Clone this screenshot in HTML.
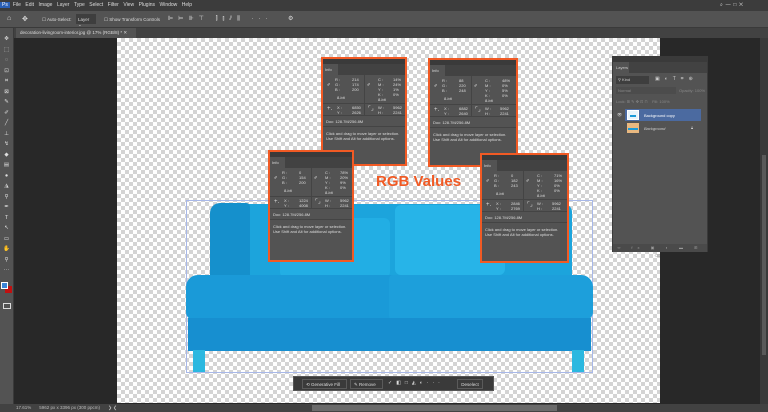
<!DOCTYPE html>
<html><head><meta charset="utf-8"><style>
*{margin:0;padding:0;box-sizing:border-box}
body{width:768px;height:412px;overflow:hidden;background:#282828;font-family:"Liberation Sans",sans-serif;position:relative;color:#ccc}
.a{position:absolute}
.menu{left:0;top:0;width:768px;height:11px;background:#3c3c3c;font-size:5px;color:#ddd;line-height:11px}
.menu span{margin-right:4.5px}
.opt{left:0;top:11px;width:768px;height:17px;background:#535353;border-bottom:1px solid #3a3a3a;font-size:4.5px;color:#ddd}
.tab{left:14px;top:28px;width:754px;height:10px;background:#424242}
.tool{left:0;top:28px;width:14px;height:377px;background:#535353;border-right:1px solid #3a3a3a}
.canvas{left:117px;top:38px;width:543px;height:365px;background-color:#fff;background-image:conic-gradient(#d4d4d4 25%,#fff 0 50%,#d4d4d4 0 75%,#fff 0);background-size:8px 8px}
.status{left:0;top:404px;width:768px;height:8px;background:#424242;font-size:4.5px;color:#bbb;line-height:8px}
.info{width:86px;height:109px;border:2px solid #f15a24;background:#535353;font-size:4px;color:#ddd;overflow:hidden}
.info .h{position:absolute;left:0;top:0;right:0;height:5px;background:#3a3a3a}
.info .t{position:absolute;left:0;top:5px;right:0;height:11px;background:#424242}
.info .t b{display:block;width:15px;height:11px;background:#535353;font-weight:normal;line-height:11px;padding-left:2px}
.info .l{position:absolute;background:#444}
.info p{position:absolute;white-space:nowrap;line-height:5px}
.lay{left:612px;top:56px;width:96px;height:196px;background:#535353;border:1px solid #3a3a3a;font-size:4px;color:#ccc}
</style></head><body>
<div class="a menu"><span style="background:#2a5fb5;color:#fff;padding:0 2px;margin-right:3px">Ps</span><span>File</span><span>Edit</span><span>Image</span><span>Layer</span><span>Type</span><span>Select</span><span>Filter</span><span>View</span><span>Plugins</span><span>Window</span><span>Help</span>
<span class="a" style="left:720px;top:0">⌕ &nbsp;— &nbsp;□ &nbsp;✕</span></div>
<div class="a opt"><span class="a" style="left:7px;top:4px;font-size:7px">⌂</span><span class="a" style="left:22px;top:4px;font-size:7px">✥</span><span class="a" style="left:42px;top:6px">☐ Auto-Select:</span><span class="a" style="left:76px;top:3px;width:20px;height:10px;background:#3e3e3e;padding:3px 2px">Layer ⌄</span><span class="a" style="left:104px;top:6px">☐ Show Transform Controls</span><span class="a" style="left:168px;top:4px;font-size:6px;letter-spacing:5px">⊫⊨⊪⊤ ⫿⫾⫽⫼ ···</span><span class="a" style="left:288px;top:4px;font-size:6px">⚙</span></div>
<div class="a tab"><div class="a" style="left:2px;top:0;width:120px;height:10px;background:#535353;font-size:4.5px;line-height:10px;padding-left:4px;color:#ddd">decoration-livingroom-interior.jpg @ 17% (RGB/8) * ✕</div></div>
<div class="a tool"><div style="font-size:5.5px;line-height:10.5px;text-align:center;color:#ddd;padding-top:6px">✥<br>⬚<br>◌<br>⊡<br>⌗<br>⊠<br>✎<br>✐<br>╱<br>⊥<br>↯<br>◆<br>▤<br>●<br>◮<br>⚲<br>✒<br>T<br>↖<br>▭<br>✋<br>⚲<br>···</div>
<div class="a" style="left:5px;top:258px;width:7px;height:7px;background:#c01010"></div>
<div class="a" style="left:1px;top:254px;width:7px;height:7px;background:#3a86d8;border:1px solid #fff"></div>
<div class="a" style="left:3px;top:275px;width:8px;height:6px;border:1px solid #ddd"></div></div>
<div class="a" style="left:760px;top:38px;width:8px;height:366px;background:#3a3a3a"></div>
<div class="a" style="left:762px;top:155px;width:4px;height:200px;background:#5a5a5a"></div>
<div class="a canvas"></div>
<!-- sofa -->
<div class="a" style="left:186px;top:200px;width:407px;height:173px;border:1px solid #a8b8e8"></div>
<div class="a" style="left:212px;top:204px;width:360px;height:80px;background:#1ca4dc;border-radius:8px 8px 0 0"></div>
<div class="a" style="left:210px;top:203px;width:40px;height:80px;background:#1590cc;border-radius:10px 4px 0 0"></div>
<div class="a" style="left:395px;top:205px;width:110px;height:70px;background:#27b4e8;border-radius:6px"></div>
<div class="a" style="left:280px;top:218px;width:110px;height:60px;background:#22aee4;border-radius:6px"></div>
<div class="a" style="left:186px;top:275px;width:210px;height:45px;background:#1a9ad8;border-radius:12px 4px 4px 8px"></div>
<div class="a" style="left:389px;top:275px;width:204px;height:45px;background:#1d9fdb;border-radius:4px 12px 8px 4px"></div>
<div class="a" style="left:188px;top:318px;width:403px;height:33px;background:#178fd0"></div>
<div class="a" style="left:193px;top:350px;width:12px;height:22px;background:#2bb8e0"></div>
<div class="a" style="left:572px;top:350px;width:12px;height:22px;background:#2bb8e0"></div>
<!-- info panels -->
<div class="a info" style="left:321px;top:57px">
<div class="h"></div><div class="t"><b>Info</b></div>
<p style="left:4px;top:23px">✐</p><p style="left:12px;top:18px">R :<br>G :<br>B :</p><p style="left:29px;top:18px">214<br>174<br>200</p>
<p style="left:44px;top:23px">✐</p><p style="left:55px;top:18px">C :<br>M :<br>Y :<br>K :</p><p style="left:70px;top:18px">14%<br>24%<br>1%<br>0%</p>
<p style="left:14px;top:36px">8-bit</p><p style="left:55px;top:38px">8-bit</p>
<div class="l" style="left:0;right:0;top:44px;height:1px"></div><div class="l" style="left:41px;width:1px;top:16px;height:40px"></div>
<p style="left:4px;top:48px;font-size:6px">+.</p><p style="left:14px;top:46px">X :<br>Y :</p><p style="left:29px;top:46px">6850<br>2626</p>
<p style="left:45px;top:48px;font-size:6px">⌜⌟</p><p style="left:55px;top:46px">W :<br>H :</p><p style="left:70px;top:46px">5962<br>2241</p>
<div class="l" style="left:0;right:0;top:56px;height:1px"></div>
<p style="left:3px;top:60px">Doc: 128.7M/256.8M</p>
<div class="l" style="left:0;right:0;top:67px;height:1px"></div>
<p style="left:3px;top:72px">Click and drag to move layer or selection.<br>Use Shift and Alt for additional options.</p></div>

<div class="a info" style="left:428px;top:58px;width:90px">
<div class="h"></div><div class="t"><b>Info</b></div>
<p style="left:4px;top:23px">✐</p><p style="left:12px;top:18px">R :<br>G :<br>B :</p><p style="left:29px;top:18px">88<br>220<br>248</p>
<p style="left:44px;top:23px">✐</p><p style="left:55px;top:18px">C :<br>M :<br>Y :<br>K :</p><p style="left:72px;top:18px">48%<br>0%<br>5%<br>0%</p>
<p style="left:14px;top:36px">8-bit</p><p style="left:55px;top:38px">8-bit</p>
<div class="l" style="left:0;right:0;top:44px;height:1px"></div><div class="l" style="left:41px;width:1px;top:16px;height:40px"></div>
<p style="left:4px;top:48px;font-size:6px">+.</p><p style="left:14px;top:46px">X :<br>Y :</p><p style="left:29px;top:46px">6882<br>2640</p>
<p style="left:45px;top:48px;font-size:6px">⌜⌟</p><p style="left:55px;top:46px">W :<br>H :</p><p style="left:70px;top:46px">5962<br>2241</p>
<div class="l" style="left:0;right:0;top:56px;height:1px"></div>
<p style="left:3px;top:60px">Doc: 128.7M/256.8M</p>
<div class="l" style="left:0;right:0;top:67px;height:1px"></div>
<p style="left:3px;top:72px">Click and drag to move layer or selection.<br>Use Shift and Alt for additional options.</p></div>

<div class="a info" style="left:268px;top:150px;height:112px">
<div class="h"></div><div class="t"><b>Info</b></div>
<p style="left:4px;top:23px">✐</p><p style="left:12px;top:18px">R :<br>G :<br>B :</p><p style="left:29px;top:18px">0<br>154<br>200</p>
<p style="left:44px;top:23px">✐</p><p style="left:55px;top:18px">C :<br>M :<br>Y :<br>K :</p><p style="left:70px;top:18px">78%<br>20%<br>9%<br>0%</p>
<p style="left:14px;top:36px">8-bit</p><p style="left:55px;top:38px">8-bit</p>
<div class="l" style="left:0;right:0;top:44px;height:1px"></div><div class="l" style="left:41px;width:1px;top:16px;height:40px"></div>
<p style="left:4px;top:48px;font-size:6px">+.</p><p style="left:14px;top:46px">X :<br>Y :</p><p style="left:29px;top:46px">1224<br>4008</p>
<p style="left:45px;top:48px;font-size:6px">⌜⌟</p><p style="left:55px;top:46px">W :<br>H :</p><p style="left:70px;top:46px">5962<br>2241</p>
<div class="l" style="left:0;right:0;top:56px;height:1px"></div>
<p style="left:3px;top:60px">Doc: 128.7M/256.8M</p>
<div class="l" style="left:0;right:0;top:67px;height:1px"></div>
<p style="left:3px;top:72px">Click and drag to move layer or selection.<br>Use Shift and Alt for additional options.</p></div>

<div class="a info" style="left:480px;top:153px;width:89px;height:110px">
<div class="h"></div><div class="t"><b>Info</b></div>
<p style="left:4px;top:23px">✐</p><p style="left:12px;top:18px">R :<br>G :<br>B :</p><p style="left:29px;top:18px">0<br>182<br>243</p>
<p style="left:44px;top:23px">✐</p><p style="left:55px;top:18px">C :<br>M :<br>Y :<br>K :</p><p style="left:72px;top:18px">71%<br>16%<br>0%<br>0%</p>
<p style="left:14px;top:36px">8-bit</p><p style="left:55px;top:38px">8-bit</p>
<div class="l" style="left:0;right:0;top:44px;height:1px"></div><div class="l" style="left:41px;width:1px;top:16px;height:40px"></div>
<p style="left:4px;top:48px;font-size:6px">+.</p><p style="left:14px;top:46px">X :<br>Y :</p><p style="left:29px;top:46px">2846<br>2769</p>
<p style="left:45px;top:48px;font-size:6px">⌜⌟</p><p style="left:55px;top:46px">W :<br>H :</p><p style="left:70px;top:46px">5962<br>2241</p>
<div class="l" style="left:0;right:0;top:56px;height:1px"></div>
<p style="left:3px;top:60px">Doc: 128.7M/256.8M</p>
<div class="l" style="left:0;right:0;top:67px;height:1px"></div>
<p style="left:3px;top:72px">Click and drag to move layer or selection.<br>Use Shift and Alt for additional options.</p></div>

<div class="a" style="left:376px;top:173px;font-size:15px;font-weight:bold;color:#f15a24">RGB Values</div>

<!-- layers -->
<div class="a lay">
<div class="a" style="left:0;top:0;width:94px;height:5px;background:#3a3a3a"></div>
<div class="a" style="left:0;top:5px;width:94px;height:11px;background:#424242"><span style="display:block;width:16px;height:11px;background:#535353;line-height:11px;padding-left:3px">Layers</span></div>
<div class="a" style="left:3px;top:19px;width:33px;height:8px;background:#3e3e3e;line-height:8px;padding-left:2px">⚲ Kind</div>
<div class="a" style="left:42px;top:19px;letter-spacing:5px;font-size:5px">▣◐T⌗⊕</div>
<div class="a" style="left:3px;top:30px;width:60px;height:7px;background:#4c4c4c;color:#888;line-height:7px;padding-left:2px">Normal</div>
<div class="a" style="left:66px;top:30px;color:#888;line-height:7px">Opacity: 100%</div>
<div class="a" style="left:3px;top:41px;color:#888;line-height:7px">Lock: ⊞ ✎ ✥ ⊡ ⊓ &nbsp;&nbsp;&nbsp;Fill: 100%</div>
<div class="a" style="left:12px;top:52px;width:76px;height:12px;background:#4b6aa0"></div>
<div class="a" style="left:4px;top:55px">👁</div>
<div class="a" style="left:14px;top:53px;width:12px;height:10px;background:#e8f4fb;border:1px solid #fff"><div style="margin:4px 2px;height:2px;background:#1a9ad8"></div></div>
<div class="a" style="left:31px;top:56px;color:#fff">Background copy</div>
<div class="a" style="left:14px;top:66px;width:12px;height:10px;background:#e8b880"><div style="margin:5px 1px;height:2px;background:#1a9ad8"></div></div>
<div class="a" style="left:31px;top:69px;font-style:italic">Background</div><div class="a" style="left:78px;top:68px">🔒︎</div>
<div class="a" style="left:0;top:187px;width:94px;height:8px;background:#4a4a4a;text-align:center;color:#999;letter-spacing:5px;line-height:8px">∞ fx ▣ ◐ ▬ ⊞ ⌫</div>
</div>

<!-- floating bar -->
<div class="a" style="left:293px;top:376px;width:201px;height:15px;background:#3a3a3a;border:1px solid #555;font-size:4.5px;color:#ddd">
<div class="a" style="left:8px;top:2px;width:45px;height:10px;border:1px solid #5a5a5a;line-height:9px;padding-left:3px">⟲ Generative Fill</div>
<div class="a" style="left:56px;top:2px;width:33px;height:10px;border:1px solid #5a5a5a;line-height:9px;padding-left:3px">✎ Remove</div>
<div class="a" style="left:94px;top:3px;font-size:5px;letter-spacing:4px">✓◧□◭◐···</div>
<div class="a" style="left:163px;top:2px;width:26px;height:10px;border:1px solid #5a5a5a;line-height:9px;text-align:center">Deselect</div></div>

<div class="a status"><span style="margin-left:16px">17.61%</span><span style="margin-left:8px">5962 px x 3396 px (300 ppcm)</span><span style="margin-left:8px">❯ ❮</span>
<div class="a" style="left:312px;top:1px;width:245px;height:6px;background:#6a6a6a"></div></div>
</body></html>
